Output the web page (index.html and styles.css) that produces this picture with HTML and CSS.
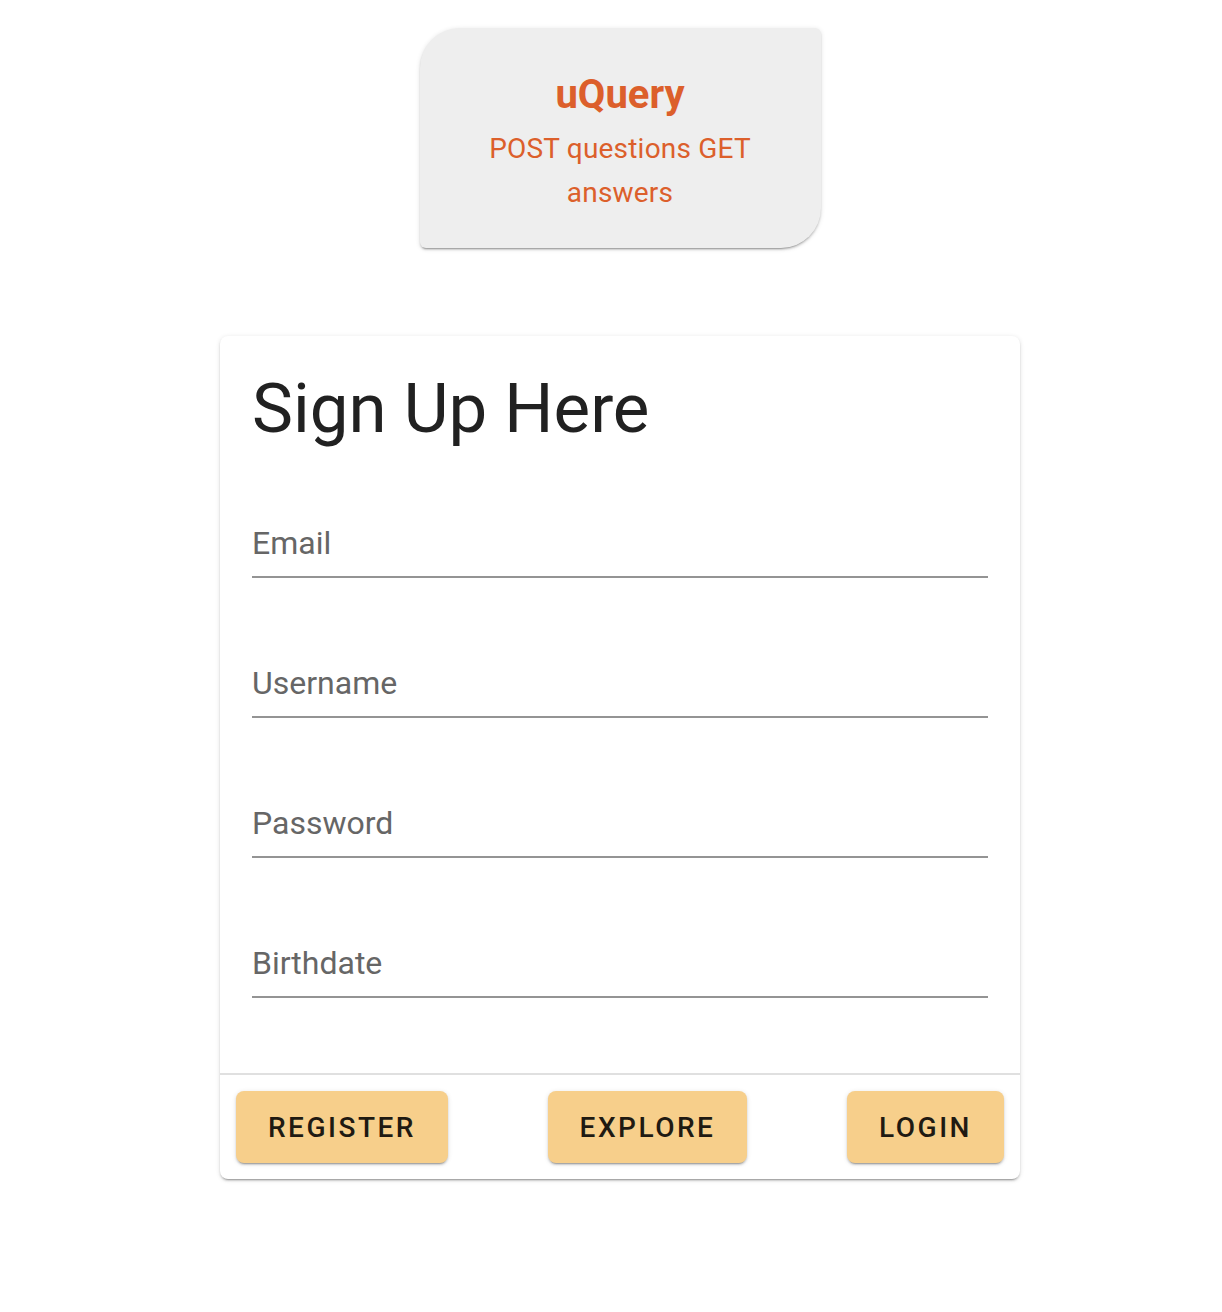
FILE: index.html
```html
<!DOCTYPE html>
<html lang="en">
<head>
<meta charset="utf-8">
<title>uQuery - Sign Up</title>
<link rel="stylesheet" href="styles.css">
</head>
<body>
<div class="page">
  <header class="brand">
    <div class="brand-title">uQuery</div>
    <div class="brand-sub">POST questions GET answers</div>
  </header>

  <main class="card">
    <h1 class="card-title">Sign Up Here</h1>
    <form class="form">
      <div class="field"><label class="field-label">Email</label></div>
      <div class="field"><label class="field-label">Username</label></div>
      <div class="field"><label class="field-label">Password</label></div>
      <div class="field"><label class="field-label">Birthdate</label></div>
    </form>
    <div class="divider"></div>
    <div class="actions">
      <button class="btn" type="button">Register</button>
      <button class="btn" type="button">Explore</button>
      <button class="btn" type="button">Login</button>
    </div>
  </main>
</div>
</body>
</html>
```

FILE: styles.css
```css
html, body {
  margin: 0;
  padding: 0;
  background: #ffffff;
}

body {
  font-family: Roboto, "Noto Sans", "Liberation Sans", sans-serif;
}

.page {
  padding: 28px 0 40px 18px;
  display: flex;
  flex-direction: column;
  align-items: center;
}

.brand {
  width: 401px;
  box-sizing: border-box;
  padding: 43px 16px 33px;
  background: #eeeeee;
  border-radius: 40px 6px 40px 6px;
  box-shadow: 0 3px 1px -2px rgba(0,0,0,.2), 0 2px 2px 0 rgba(0,0,0,.14), 0 1px 5px 0 rgba(0,0,0,.12);
  text-align: center;
  color: #dc5f2b;
}

.brand-title {
  font-size: 40px;
  font-weight: 700;
  line-height: 48px;
}

.brand-sub {
  margin-top: 8px;
  font-size: 28px;
  line-height: 44px;
  letter-spacing: 0.2px;
}

.card {
  margin-top: 88px;
  width: 800px;
  background: #ffffff;
  border-radius: 8px;
  box-shadow: 0 3px 1px -2px rgba(0,0,0,.2), 0 2px 2px 0 rgba(0,0,0,.14), 0 1px 5px 0 rgba(0,0,0,.12);
}

.card-title {
  margin: 0;
  padding: 32px 32px 0;
  font-size: 69px;
  font-weight: 400;
  line-height: 82px;
  color: #212121;
}

.form {
  padding: 72px 32px 0;
  display: flex;
  flex-direction: column;
  gap: 84px;
}

.field-label {
  display: block;
  font-size: 32px;
  line-height: 40px;
  color: #666666;
  padding-top: 1px;
  padding-bottom: 13px;
  border-bottom: 2px solid #949494;
}

.divider {
  margin-top: 75px;
  height: 2px;
  background: #e0e0e0;
}

.actions {
  display: flex;
  justify-content: space-between;
  padding: 16px;
}

.btn {
  height: 72px;
  padding: 0 32px;
  border: none;
  border-radius: 8px;
  background: #f7cf8b;
  color: #1f1a12;
  font-family: Roboto, "Noto Sans", "Liberation Sans", sans-serif;
  font-size: 28px;
  font-weight: 500;
  letter-spacing: 2.5px;
  text-transform: uppercase;
  box-shadow: 0 3px 1px -2px rgba(0,0,0,.2), 0 2px 2px 0 rgba(0,0,0,.14), 0 1px 5px 0 rgba(0,0,0,.12);
}
```
